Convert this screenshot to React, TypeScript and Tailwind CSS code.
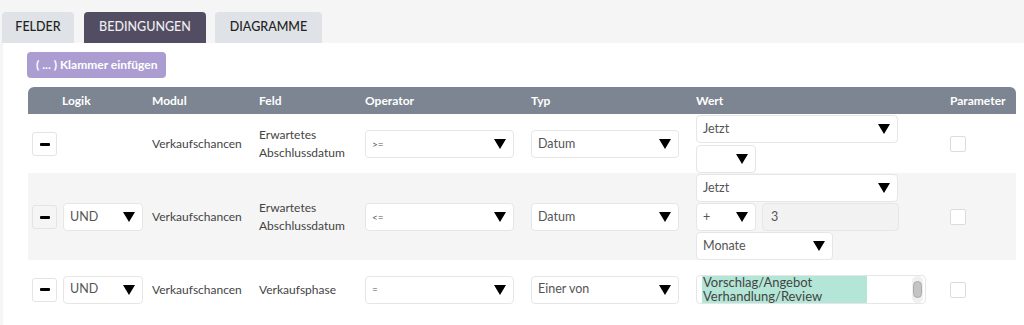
import type { ReactNode } from 'react';

const font = { fontFamily: 'Lato, "Open Sans", Arial, sans-serif' };

function Arrow() {
  return (
    <svg width="12" height="10" viewBox="0 0 12 10" className="shrink-0">
      <polygon points="0,0 12,0 6,10" fill="#000" />
    </svg>
  );
}

function Select({ value, className = '', small = false }: { value: string; className?: string; small?: boolean }) {
  return (
    <div
      className={`h-[28px] flex items-center justify-between pl-[6px] pr-[7px] bg-white border border-[#e6e6e6] rounded-[4px] text-[#555] ${small ? 'text-[10px]' : 'text-[12.5px]'} ${className}`}
    >
      <span>{value}</span>
      <Arrow />
    </div>
  );
}

function MinusButton() {
  return (
    <div className="w-[25px] h-[24px] flex items-center justify-center border border-[#e4e4e4] rounded-[3px]">
      <div className="w-[10px] h-[3px] bg-black rounded-[1px]" />
    </div>
  );
}

function Checkbox() {
  return <div className="w-[16px] h-[16px] bg-white border border-[#dcdcdc] rounded-[2px]" />;
}

function Row({ bg, logik, feld, operator, typ, wert, py }: {
  bg: string;
  logik?: string;
  feld: ReactNode;
  operator: string;
  typ: string;
  wert: ReactNode;
  py: string;
}) {
  return (
    <div className={`grid grid-cols-[31px_89px_107px_106px_166px_165px_254px_70px] items-center text-[12px] text-[#444] ${bg} ${py}`}>
      <div className="pl-[4px]">
        <MinusButton />
      </div>
      <div className="pl-[4px] pr-[5px]">{logik && <Select value={logik} />}</div>
      <div className="pl-[4px]">Verkaufschancen</div>
      <div className="pl-[4px] leading-[18px]">{feld}</div>
      <div className="pl-[4px] pr-[13px]">
        <Select value={operator} small />
      </div>
      <div className="pl-[4px] pr-[13px]">
        <Select value={typ} />
      </div>
      <div className="pl-[4px]">{wert}</div>
      <div className="pl-[4px]">
        <Checkbox />
      </div>
    </div>
  );
}

export default function App() {
  return (
    <div className="w-[1024px] h-[325px] bg-[#f5f5f5] overflow-hidden" style={font}>
      <div className="flex gap-[10px] pl-[2px] pt-[12px] h-[43px]">
        <div className="w-[72px] flex items-center justify-center rounded-t-[4px] bg-[#dfe2e6] text-[12.5px] text-[#222] font-medium">FELDER</div>
        <div className="w-[122px] flex items-center justify-center rounded-t-[4px] bg-[#534d64] text-[12.5px] text-[#eee] font-medium">BEDINGUNGEN</div>
        <div className="w-[107px] -ml-[1px] flex items-center justify-center rounded-t-[4px] bg-[#dfe2e6] text-[12.5px] text-[#222] font-medium">DIAGRAMME</div>
      </div>
      <div className="ml-[3px] bg-white h-[282px] pl-[24px] pt-[8px]">
        <div className="inline-flex items-center h-[26px] px-[9px] bg-[#ab9dd2] rounded-[4px] text-white text-[12px] font-bold">
          ( ... ) Klammer einfügen
        </div>
        <div className="w-[988px] ml-[1px] mt-[9px]">
          <div className="grid grid-cols-[31px_89px_107px_106px_166px_165px_254px_70px] items-center h-[27px] bg-[#7c8591] rounded-t-[6px] text-white text-[12px] font-bold">
            <div />
            <div className="pl-[3px]">Logik</div>
            <div className="pl-[4px]">Modul</div>
            <div className="pl-[4px]">Feld</div>
            <div className="pl-[4px]">Operator</div>
            <div className="pl-[4px]">Typ</div>
            <div className="pl-[4px]">Wert</div>
            <div className="pl-[4px]">Parameter</div>
          </div>
          <Row
            bg="bg-white"
            py="pt-[1px]"
            feld={<>Erwartetes<br />Abschlussdatum</>}
            operator=">="
            typ="Datum"
            wert={
              <div className="flex flex-col gap-[2px]">
                <Select value="Jetzt" className="w-[202px]" />
                <Select value="" className="w-[60px]" />
              </div>
            }
          />
          <Row
            bg="bg-[#f5f5f5]"
            py="pt-[1px]"
            logik="UND"
            feld={<>Erwartetes<br />Abschlussdatum</>}
            operator="<="
            typ="Datum"
            wert={
              <div className="flex flex-col gap-[1px]">
                <Select value="Jetzt" className="w-[202px]" />
                <div className="flex gap-[6px]">
                  <Select value="+" className="w-[60px]" />
                  <div className="w-[137px] h-[28px] flex items-center pl-[8px] bg-[#f2f2f2] border border-[#e6e6e6] rounded-[4px] text-[12.5px] text-[#555]">3</div>
                </div>
                <Select value="Monate" className="w-[137px]" />
              </div>
            }
          />
          <Row
            bg="bg-white"
            py="py-[15px]"
            logik="UND"
            feld="Verkaufsphase"
            operator="="
            typ="Einer von"
            wert={
              <div className="w-[230px] h-[29px] flex bg-white border border-[#e6e6e6] rounded-[4px] overflow-hidden">
                <div className="ml-[5px] w-[165px] bg-[#b3e6d6] text-[13px] leading-[14px] text-[#444] pl-[1px] -mt-[1px] pb-[1px]">
                  <div>Vorschlag/Angebot</div>
                  <div>Verhandlung/Review</div>
                </div>
                <div className="ml-auto mr-[2px] w-[11px] flex items-center justify-center bg-[#f0f0f0] rounded-full">
                  <div className="w-[9px] h-[17px] bg-[#c4c4c4] border border-[#aaa] rounded-full" />
                </div>
              </div>
            }
          />
        </div>
      </div>
    </div>
  );
}
